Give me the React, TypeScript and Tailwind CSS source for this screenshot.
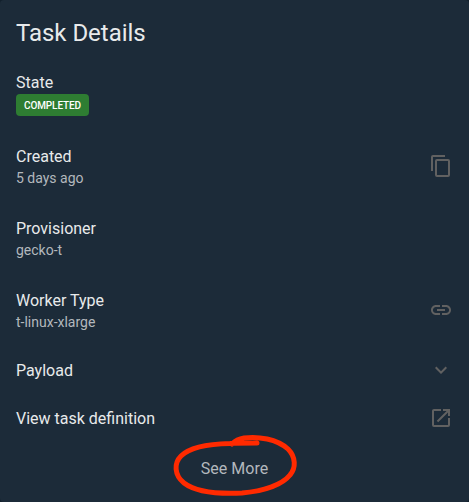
import type { ReactNode } from "react";

const icons = {
  copy: "M19,21H8V7H19M19,5H8A2,2 0 0,0 6,7V21A2,2 0 0,0 8,23H19A2,2 0 0,0 21,21V7A2,2 0 0,0 19,5M16,1H4A2,2 0 0,0 2,3V17H4V3H16V1Z",
  link: "M3.9 12c0-1.71 1.39-3.1 3.1-3.1h4V7H7c-2.76 0-5 2.24-5 5s2.24 5 5 5h4v-1.9H7c-1.71 0-3.1-1.39-3.1-3.1zM8 13h8v-2H8v2zm9-6h-4v1.9h4c1.71 0 3.1 1.39 3.1 3.1s-1.39 3.1-3.1 3.1h-4V17h4c2.76 0 5-2.24 5-5s-2.24-5-5-5z",
  chevronDown: "M7.41,8.58L12,13.17L16.59,8.58L18,10L12,16L6,10L7.41,8.58Z",
  openInNew:
    "M14,3V5H17.59L7.76,14.83L9.17,16.24L19,6.41V10H21V3M19,19H5V5H12V3H5C3.89,3 3,3.9 3,5V19A2,2 0 0,0 5,21H19A2,2 0 0,0 21,19V12H19V19Z",
};

type RowProps = {
  label: string;
  value?: ReactNode;
  icon?: keyof typeof icons;
};

function Row({ label, value, icon }: RowProps) {
  return (
    <li className={value ? "flex h-[72px] items-center justify-between" : "flex h-12 items-center justify-between"}>
      <div>
        <p className="text-base leading-6 text-[#e8eaeb]">{label}</p>
        {value && (
          <p className="-mt-px mb-px text-sm leading-5 text-[#b3b8bd]">{value}</p>
        )}
      </div>
      {icon && (
        <svg viewBox="0 0 24 24" className="mb-[2px] h-6 w-6 fill-[#616161]">
          <path d={icons[icon]} />
        </svg>
      )}
    </li>
  );
}

export default function App() {
  return (
    <div className="h-[502px] w-[469px] overflow-hidden bg-[#12202c] font-['Roboto',sans-serif]">
      <section className="h-full rounded-[4px] bg-[#1c2b39] px-4 pt-[17px]">
        <h1 className="text-2xl leading-8 tracking-[-0.03px] text-[#e8eaeb]">Task Details</h1>

        <ul className="mt-[22px]">
          <li className="h-[60px]">
            <p className="text-base leading-[23px] text-[#e8eaeb]">State</p>
            <span className="flex h-[22px] w-[73px] items-center justify-center rounded-[4px] bg-[#2e7d32] text-[10px] font-medium tracking-[-0.1px] text-white">
              COMPLETED
            </span>
          </li>
          <Row label="Created" value="5 days ago" icon="copy" />
          <Row label="Provisioner" value="gecko-t" />
          <Row label="Worker Type" value="t-linux-xlarge" icon="link" />
          <Row label="Payload" icon="chevronDown" />
          <Row label="View task definition" icon="openInNew" />
        </ul>

        <button className="relative flex h-[52px] w-full items-center justify-center text-base text-[#b3b8bd]">
          See More
          {/* hand-drawn highlight */}
          <svg
            viewBox="0 0 150 77"
            className="absolute -top-[18px] left-[144px] h-[77px] w-[150px] fill-none stroke-[#ff2a00] stroke-[5]"
            strokeLinecap="round"
            strokeLinejoin="round"
          >
            <path d="M97 18C87 18 78 18 70 18.5C48 19 29 23 21 31C14 38 14 50 24 58C37 68 61 69 82 68C103 66 122 60 130 50C136 43 136 32 128 24C117 14 98 11 84 13C78 14 75 16 72 19" />
          </svg>
        </button>
      </section>
    </div>
  );
}
